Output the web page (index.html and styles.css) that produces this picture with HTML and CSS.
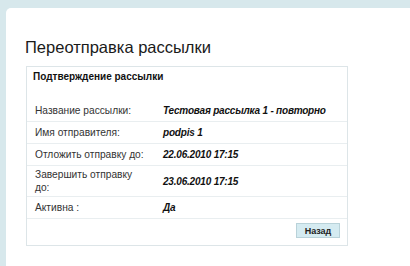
FILE: index.html
```html
<!DOCTYPE html>
<html lang="ru">
<head>
    <meta charset="UTF-8">
    <title>Переотправка рассылки</title>
    <link rel="stylesheet" href="styles.css">
</head>
<body>

<div class="page">
    <h1>Переотправка рассылки</h1>

    <div class="confirm-box">
        <div class="box-title">Подтверждение рассылки</div>

        <div class="info-row">
            <div class="info-label">Название рассылки:</div>
            <div class="info-value">Тестовая рассылка 1 - повторно</div>
        </div>
        <div class="info-row">
            <div class="info-label">Имя отправителя:</div>
            <div class="info-value">podpis 1</div>
        </div>
        <div class="info-row">
            <div class="info-label">Отложить отправку до:</div>
            <div class="info-value">22.06.2010 17:15</div>
        </div>
        <div class="info-row">
            <div class="info-label">Завершить отправку<br>до:</div>
            <div class="info-value">23.06.2010 17:15</div>
        </div>
        <div class="info-row">
            <div class="info-label">Активна :</div>
            <div class="info-value">Да</div>
        </div>

        <div class="box-footer">
            <button class="back-btn">Назад</button>
        </div>
    </div>
</div>

</body>
</html>
```

FILE: styles.css
```css
body {
    margin: 0;
    background-color: #d7e8ec;
    font-family: "Liberation Sans", Arial, sans-serif;
    color: #333;
}
.page {
    margin: 8px 0 0 6px;
    min-height: 258px;
    padding: 29px 0 0 19px;
    box-sizing: border-box;
    background-color: #fff;
    border-top-left-radius: 5px;
}
h1 {
    margin: 0 0 9px 0;
    font-size: 16.5px;
    line-height: 20px;
    font-weight: normal;
    color: #1a1a1a;
}
.confirm-box {
    width: 320px;
    margin-left: 1px;
    border: 1px solid #dde5e8;
}
.box-title {
    padding: 3px 6px 0 6px;
    height: 30px;
    font-size: 10px;
    line-height: 13px;
    font-weight: bold;
    color: #111;
}
.info-row {
    display: grid;
    grid-template-columns: 136px 1fr;
    align-items: center;
    min-height: 21px;
    border-bottom: 1px solid #e9eef0;
}
.info-label {
    padding: 2px 8px 2px 8px;
    font-size: 10.2px;
    line-height: 13px;
}
.info-value {
    padding: 2px 0 2px 0;
    font-size: 10px;
    line-height: 13px;
    font-weight: bold;
    font-style: italic;
    letter-spacing: -0.2px;
    white-space: nowrap;
    color: #111;
}
.box-footer {
    display: flex;
    justify-content: flex-end;
    padding: 4px 7px 7px 0;
}
.back-btn {
    width: 44px;
    height: 15px;
    padding: 0;
    font-family: "Liberation Sans", Arial, sans-serif;
    font-size: 9px;
    font-weight: bold;
    color: #222;
    background-color: #d5ebf1;
    border: 1px solid #b9d2d9;
}
```
